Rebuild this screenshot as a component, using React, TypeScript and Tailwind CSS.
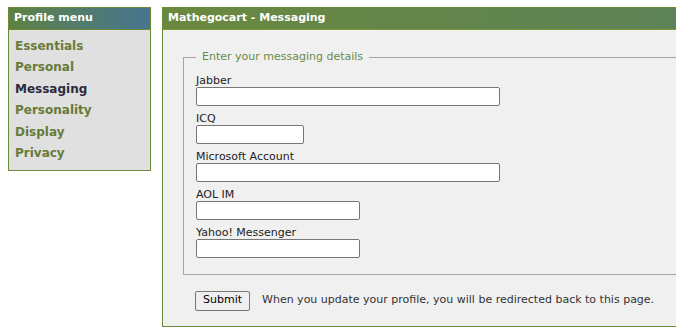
import React from 'react';

const menu = ['Essentials', 'Personal', 'Messaging', 'Personality', 'Display', 'Privacy'];

const fields = [
  { label: 'Jabber', w: 'w-[304px]' },
  { label: 'ICQ', w: 'w-[108px]' },
  { label: 'Microsoft Account', w: 'w-[304px]' },
  { label: 'AOL IM', w: 'w-[164px]' },
  { label: 'Yahoo! Messenger', w: 'w-[164px]' },
];

const App = () => {
  return (
    <div className="w-[676px] h-[334px] overflow-hidden bg-white text-[11px] text-[#222] font-['DejaVu_Sans',Tahoma,sans-serif]">
      <div className="flex items-start gap-[11px] pt-[7px] pl-[8px]">
        {/* Profile menu */}
        <div className="w-[143px] shrink-0 border border-[#6b8a3a] bg-[#dfe0df]">
          <div className="h-[22px] flex items-center px-[5px] bg-gradient-to-r from-[#5f8140] to-[#47748f] text-white font-bold text-[11px] border-b border-[#6b8a3a]">
            Profile menu
          </div>
          <ul className="pt-[5px] pb-[6px] px-[6px]">
            {menu.map(m => (
              <li key={m} className="h-[21.5px] flex items-center">
                <a className={`font-bold text-[12px] ${m === 'Messaging' ? 'text-[#2c2a3c]' : 'text-[#677b38]'}`}>{m}</a>
              </li>
            ))}
          </ul>
        </div>

        {/* Main panel */}
        <div className="w-[560px] shrink-0 border border-[#6b8a3a] bg-[#f0f0f0]">
          <div className="h-[22px] flex items-center px-[5px] bg-gradient-to-r from-[#6a883e] to-[#5c8258] text-white font-bold text-[11px] border-b border-[#7a9a3a]">
            Mathegocart - Messaging
          </div>
          <div className="px-[20px] pt-[19px] pb-[15px]">
            <fieldset className="border border-[#a5a5a0] px-[12px] pb-[16px]">
              <legend className="px-[6px] text-[#6a8a48] text-[11px]">Enter your messaging details</legend>
              <div className="flex flex-col gap-[7px] mt-[9px]">
                {fields.map(f => (
                  <label key={f.label} className="flex flex-col">
                    <span className="leading-[12px]">{f.label}</span>
                    <input className={`${f.w} h-[19px] bg-white border border-[#767676] rounded-[2px]`} />
                  </label>
                ))}
              </div>
            </fieldset>
            <div className="flex items-center gap-[12px] mt-[16px] pl-[12px]">
              <button className="h-[20px] px-[7px] border border-[#767676] rounded-[2px] bg-[#efefef] text-[11px] text-black">Submit</button>
              <span className="text-[#333]">When you update your profile, you will be redirected back to this page.</span>
            </div>
          </div>
        </div>
      </div>
    </div>
  );
};

export default App;
